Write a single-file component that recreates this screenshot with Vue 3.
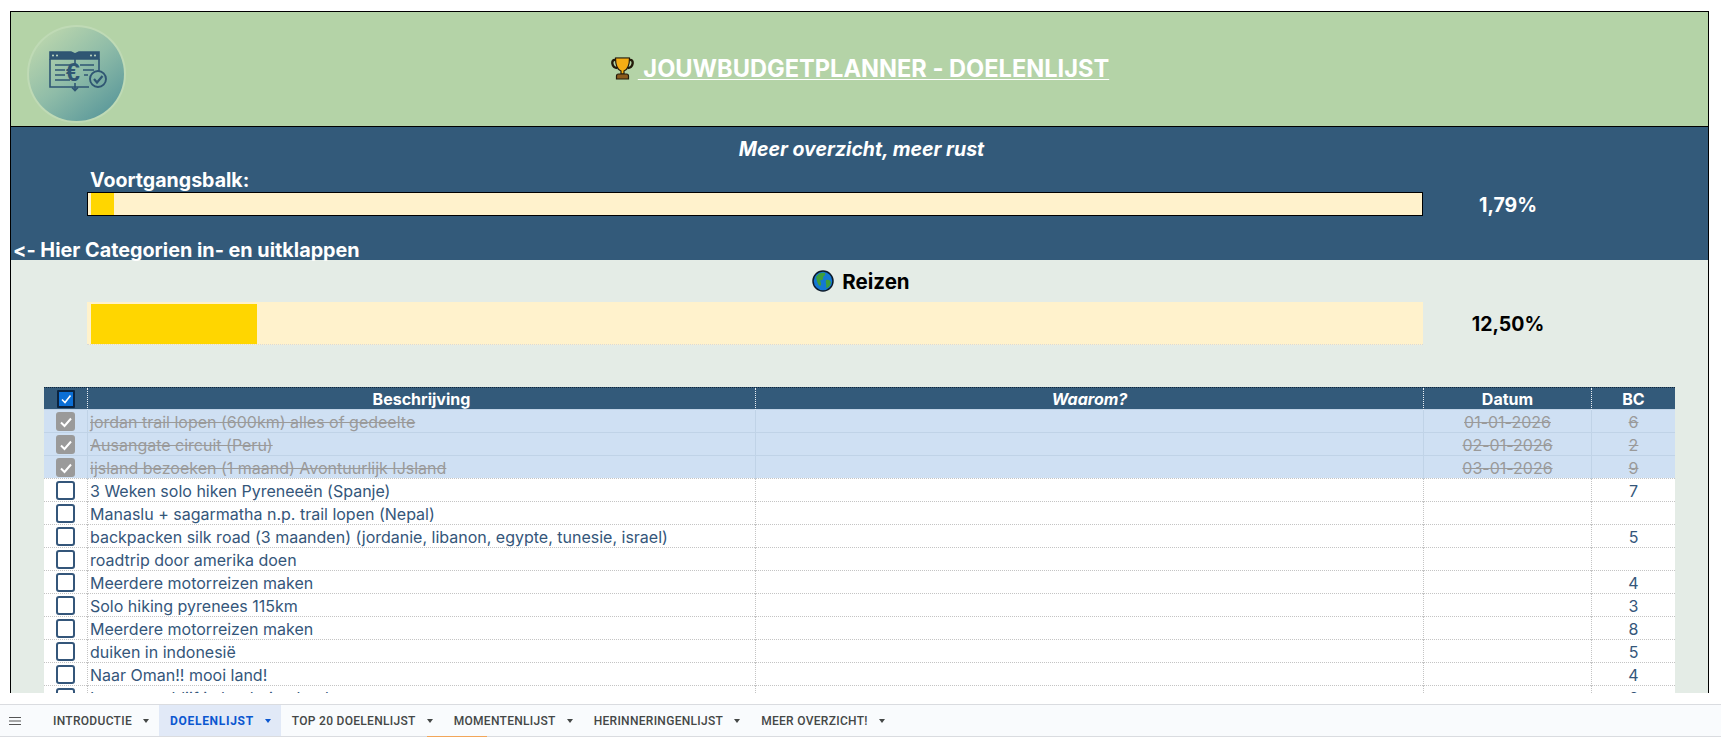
<script setup>
const rows = [
  { text: 'jordan trail lopen (600km) alles of gedeelte', date: '01-01-2026', bc: '6', done: true },
  { text: 'Ausangate circuit (Peru)', date: '02-01-2026', bc: '2', done: true },
  { text: 'ijsland bezoeken (1 maand) Avontuurlijk IJsland', date: '03-01-2026', bc: '9', done: true },
  { text: '3 Weken solo hiken Pyreneeën (Spanje)', date: '', bc: '7' },
  { text: 'Manaslu + sagarmatha n.p. trail lopen (Nepal)', date: '', bc: '' },
  { text: 'backpacken silk road (3 maanden) (jordanie, libanon, egypte, tunesie, israel)', date: '', bc: '5' },
  { text: 'roadtrip door amerika doen', date: '', bc: '' },
  { text: 'Meerdere motorreizen maken', date: '', bc: '4' },
  { text: 'Solo hiking pyrenees 115km', date: '', bc: '3' },
  { text: 'Meerdere motorreizen maken', date: '', bc: '8' },
  { text: 'duiken in indonesië', date: '', bc: '5' },
  { text: 'Naar Oman!! mooi land!', date: '', bc: '4' },
  { text: 'Langer verblijf in het buitenland', date: '', bc: '6' },
]
const tabs = [
  { name: 'INTRODUCTIE' },
  { name: 'DOELENLIJST', active: true },
  { name: 'TOP 20 DOELENLIJST' },
  { name: 'MOMENTENLIJST' },
  { name: 'HERINNERINGENLIJST' },
  { name: 'MEER OVERZICHT!' },
]
</script>

<template>
  <div class="page">
    <div class="sheet">
      <div class="frame">
        <header class="hero">
          <div class="logo">
            <svg class="logo-icon" width="60" height="42" viewBox="0 0 60 42" fill="none" stroke="#2f5673" stroke-width="1.6">
              <path d="M1 2 H22 L26 4 L30 2 H50 V9 H1 Z" fill="#2f5673" />
              <path d="M50 9 V21" />
              <path d="M1 9 V37 H40" />
              <path d="M26 9 V14 M26 33 V40 M23 37.5 L26 40.5 L29 37.5" />
              <path d="M6 15 H21 M6 20 H16 M6 25 H16 M6 30 H21 M31 15 H45 M34 20 H45 M35 25 H39" stroke-width="1.7" />
              <circle cx="4" cy="5.5" r="1" fill="#c5dcc4" stroke="none" />
              <circle cx="8" cy="5.5" r="1" fill="#c5dcc4" stroke="none" />
              <circle cx="42" cy="5.500" r="1" fill="#c5dcc4" stroke="none" />
              <circle cx="46" cy="5.500" r="1" fill="#c5dcc4" stroke="none" />
              <circle cx="49" cy="29" r="8" stroke-width="1.900" />
              <path d="M45 29 L48 32.500 L53.500 26" stroke-width="2.200" />
              <text x="17" y="31" class="euro" fill="#2f5673" stroke="none">€</text>
            </svg>
          </div>
          <h1 class="title"><svg class="trophy" width="25" height="25" viewBox="0 0 24 25">
              <path d="M5 3 H19 M5 4 C0 3 1 12 7 12 M19 4 C24 3 23 12 17 12" fill="none" stroke="#231a0a" stroke-width="2.400" />
              <path d="M5 2 H19 C19 10 16 14 13.500 15 V18 H10.500 V15 C8 14 5 10 5 2 Z" fill="#f5ad14" stroke="#231a0a" stroke-width="1.200" />
              <path d="M6 20 Q6 18 8 18 H16 Q18 18 18 20 V23 H6 Z" fill="#8a5a1d" stroke="#231a0a" stroke-width="1.200" />
            </svg>&nbsp;JOUWBUDGETPLANNER - DOELENLIJST</h1>
        </header>

        <section class="summary">
          <div class="motto">Meer overzicht, meer rust</div>
          <div class="label">Voortgangsbalk:</div>
          <div class="bar-row">
            <div class="bar bar-main"><div class="fill fill-main"></div></div>
            <div class="pct">1,79%</div>
          </div>
          <div class="hint">&lt;- Hier Categorien in- en uitklappen</div>
        </section>

        <section class="category">
          <div class="cat-title">
            <svg width="22" height="22" viewBox="0 0 22 22">
              <circle cx="11" cy="11" r="10" fill="#1478d4" stroke="#0c1a2a" stroke-width="1.500" />
              <path d="M4 7 C6 3 10 2 13 3 C14 5 12 6 11 7 C12 9 10 11 8 10 C9 13 10 15 8 16 C5 14 5 10 4 7 Z" fill="#3f9f3a" />
              <path d="M14 10 C17 9 19 11 19 13 C18 16 16 18 14 18 C15 15 13 12 14 10 Z" fill="#3f9f3a" />
            </svg>
            <span>Reizen</span>
          </div>
          <div class="bar-row bar-row-cat">
            <div class="bar bar-cat"><div class="fill fill-cat"></div></div>
            <div class="pct pct-dark">12,50%</div>
          </div>

          <div class="table">
            <div class="tr head">
              <div class="td c-check"><span class="box box-head"><svg width="12" height="12" viewBox="0 0 12 12"><path d="M2 6.500 L5 9.500 L10.500 2.500" fill="none" stroke="#fff" stroke-width="1.600" /></svg></span></div>
              <div class="td">Beschrijving</div>
              <div class="td waarom">Waarom?</div>
              <div class="td">Datum</div>
              <div class="td">BC</div>
            </div>
            <div v-for="(row, i) in rows" :key="i" class="tr" :class="{ done: row.done }">
              <div class="td c-check">
                <span class="box" :class="{ 'box-done': row.done }">
                  <svg v-if="row.done" width="14" height="14" viewBox="0 0 14 14"><path d="M2 7.500 L5.500 11 L12 3.500" fill="none" stroke="#fff" stroke-width="2" /></svg>
                </span>
              </div>
              <div class="td c-text">{{ row.text }}</div>
              <div class="td"></div>
              <div class="td">{{ row.date }}</div>
              <div class="td">{{ row.bc }}</div>
            </div>
          </div>
        </section>
      </div>
    </div>

    <footer class="tabbar">
      <svg class="menu" width="12" height="8" viewBox="0 0 12 8"><path d="M0 .5 H12 M0 4 H12 M0 7.500 H12" stroke="#555" stroke-width="1" /></svg>
      <div v-for="tab in tabs" :key="tab.name" class="tab" :class="{ active: tab.active }">
        <span>{{ tab.name }}</span>
        <i class="caret"></i>
      </div>
      <i class="accent"></i>
    </footer>
  </div>
</template>

<style scoped>
.page {
  width: 1721px;
  height: 737px;
  overflow: hidden;
  background: #fff;
  font-family: "Inter", "Liberation Sans", sans-serif;
  font-variant-ligatures: none;
  font-feature-settings: "calt" 0;
  position: relative;
}
.sheet {
  height: 693px;
  padding: 11px 12px 0 10px;
  box-sizing: border-box;
  overflow: hidden;
}
.frame {
  width: 1699px;
  box-sizing: border-box;
  border: 1px solid #000;
  border-bottom: 0;
}
.hero {
  height: 115px;
  box-sizing: border-box;
  background: #b4d3a7;
  border-bottom: 1px solid #000;
  display: grid;
  grid-template-columns: 1fr auto 1fr;
  align-items: center;
}
.logo {
  width: 99px;
  height: 98px;
  margin-left: 16px;
  margin-top: 9px;
  box-sizing: border-box;
  border-radius: 50%;
  border: 2px solid #bfdab5;
  background: linear-gradient(140deg, #b9d5ad 12%, #8fbca8 50%, #5d9a9b 88%);
  display: flex;
  align-items: center;
  justify-content: center;
}
.logo-icon { margin: 0 0 6px 4px; }
.euro {
  font-family: "Liberation Sans", sans-serif;
  font-size: 25px;
  font-weight: 700;
}
.title {
  grid-column: 2;
  margin: -1px 0 0;
  color: #fff;
  font-size: 23.6px;
  line-height: 30px;
  font-weight: 700;
  text-decoration: underline;
  text-decoration-thickness: 1px;
  text-underline-offset: 2px;
  white-space: nowrap;
}
.trophy { vertical-align: -4px; margin-right: 3px; }
.summary {
  height: 133px;
  background: #335a7a;
  color: #fff;
  display: flex;
  flex-direction: column;
}
.motto {
  height: 42px;
  line-height: 44px;
  text-align: center;
  padding-left: 4px;
  font-size: 19.5px;
  font-weight: 700;
  font-style: italic;
}
.label {
  height: 22px;
  line-height: 22px;
  padding-left: 79px;
  font-size: 19.6px;
  font-weight: 700;
}
.bar-row {
  display: grid;
  grid-template-columns: 1336px 168px;
  margin-left: 76px;
  align-items: center;
}
.bar {
  background: #fff2cc;
  box-sizing: border-box;
}
.bar-main {
  height: 24px;
  border: 1px solid #000;
  padding: 0 0 0 3px;
}
.fill { height: 100%; background: #ffd600; }
.fill-main { width: 23px; }
.pct {
  text-align: center;
  font-size: 19.5px;
  font-weight: 700;
  margin-top: 2px;
  padding-left: 2px;
}
.pct-dark { color: #000; margin-top: 0; }
.hint {
  margin-top: auto;
  padding-left: 2px;
  line-height: 20px;
  font-size: 19.8px;
  font-weight: 700;
  white-space: nowrap;
}
.category {
  background: #e4ece6;
  height: 433px;
}
.cat-title {
  height: 42px;
  display: flex;
  align-items: center;
  justify-content: center;
  gap: 8px;
  padding-left: 3px;
  font-size: 20.5px;
  font-weight: 700;
  color: #000;
}
.bar-cat {
  height: 43px;
  padding: 2px 0 0 4px;
  border-bottom: 1px dotted #d9d9d9;
}
.fill-cat { width: 166px; }
.table {
  margin: 42px 0 0 33px;
  width: 1631px;
  font-size: 16px;
  color: #34567a;
}
.tr {
  display: grid;
  grid-template-columns: 44px 668px 668px 168px 83px;
  height: 23px;
  background: #fff;
  box-sizing: border-box;
  border-top: 1px dotted #c4c4c4;
}
.td {
  display: flex;
  align-items: center;
  justify-content: center;
  line-height: 22px;
  padding-top: 1px;
  border-right: 1px dotted #c4c4c4;
  box-sizing: border-box;
  white-space: nowrap;
}
.td:last-child { border-right: 0; }
.c-check { padding-top: 0; }
.c-text { justify-content: flex-start; padding-left: 2px; }
.head {
  height: 22px;
  background: #335a7a;
  color: #fff;
  font-weight: 700;
  border-top: 1px dotted #10263a;
}
.head .td { border-right-color: #e9eef3; padding-top: 0; }
.waarom { font-style: italic; }
.done {
  background: #cfe0f3;
  color: #9a9a9a;
  border-top: 1px solid #c0d3e7;
  text-decoration: line-through;
}
.done .td { border-right: 1px solid #c0d3e7; }
.done .td:last-child { border-right: 0; }
.box {
  width: 19px;
  height: 19px;
  box-sizing: border-box;
  border: 2px solid #34567a;
  border-radius: 3px;
  display: flex;
  align-items: center;
  justify-content: center;
}
.box-head {
  width: 18px;
  height: 18px;
  border-radius: 1px;
  background: #0b6fd6;
  border-color: #0b2440;
}
.box-done { background: #9a9a9a; border-color: #9a9a9a; }
.tabbar {
  height: 33px;
  box-sizing: border-box;
  margin-top: 11px;
  background: #f9fbfd;
  border-top: 1px solid #dadce0;
  border-bottom: 1px solid #dadce0;
  display: flex;
  align-items: stretch;
  font-family: "Roboto", "Liberation Sans", sans-serif;
  font-size: 12px;
  font-weight: 500;
  letter-spacing: 0.3px;
  color: #444746;
  position: relative;
}
.menu { align-self: center; margin: 0 21px 0 9px; }
.tab {
  display: flex;
  align-items: center;
  gap: 11px;
  padding: 1px 10px 0 11px;
}
.active {
  background: #e1e9f7;
  color: #0b57d0;
  font-weight: 700;
  letter-spacing: 0.7px;
}
.caret {
  width: 0;
  height: 0;
  border-left: 3.500px solid transparent;
  border-right: 3.500px solid transparent;
  border-top: 4px solid currentColor;
}
.accent {
  position: absolute;
  left: 427px;
  bottom: -1px;
  width: 60px;
  height: 1px;
  background: #f2a65a;
}
</style>
